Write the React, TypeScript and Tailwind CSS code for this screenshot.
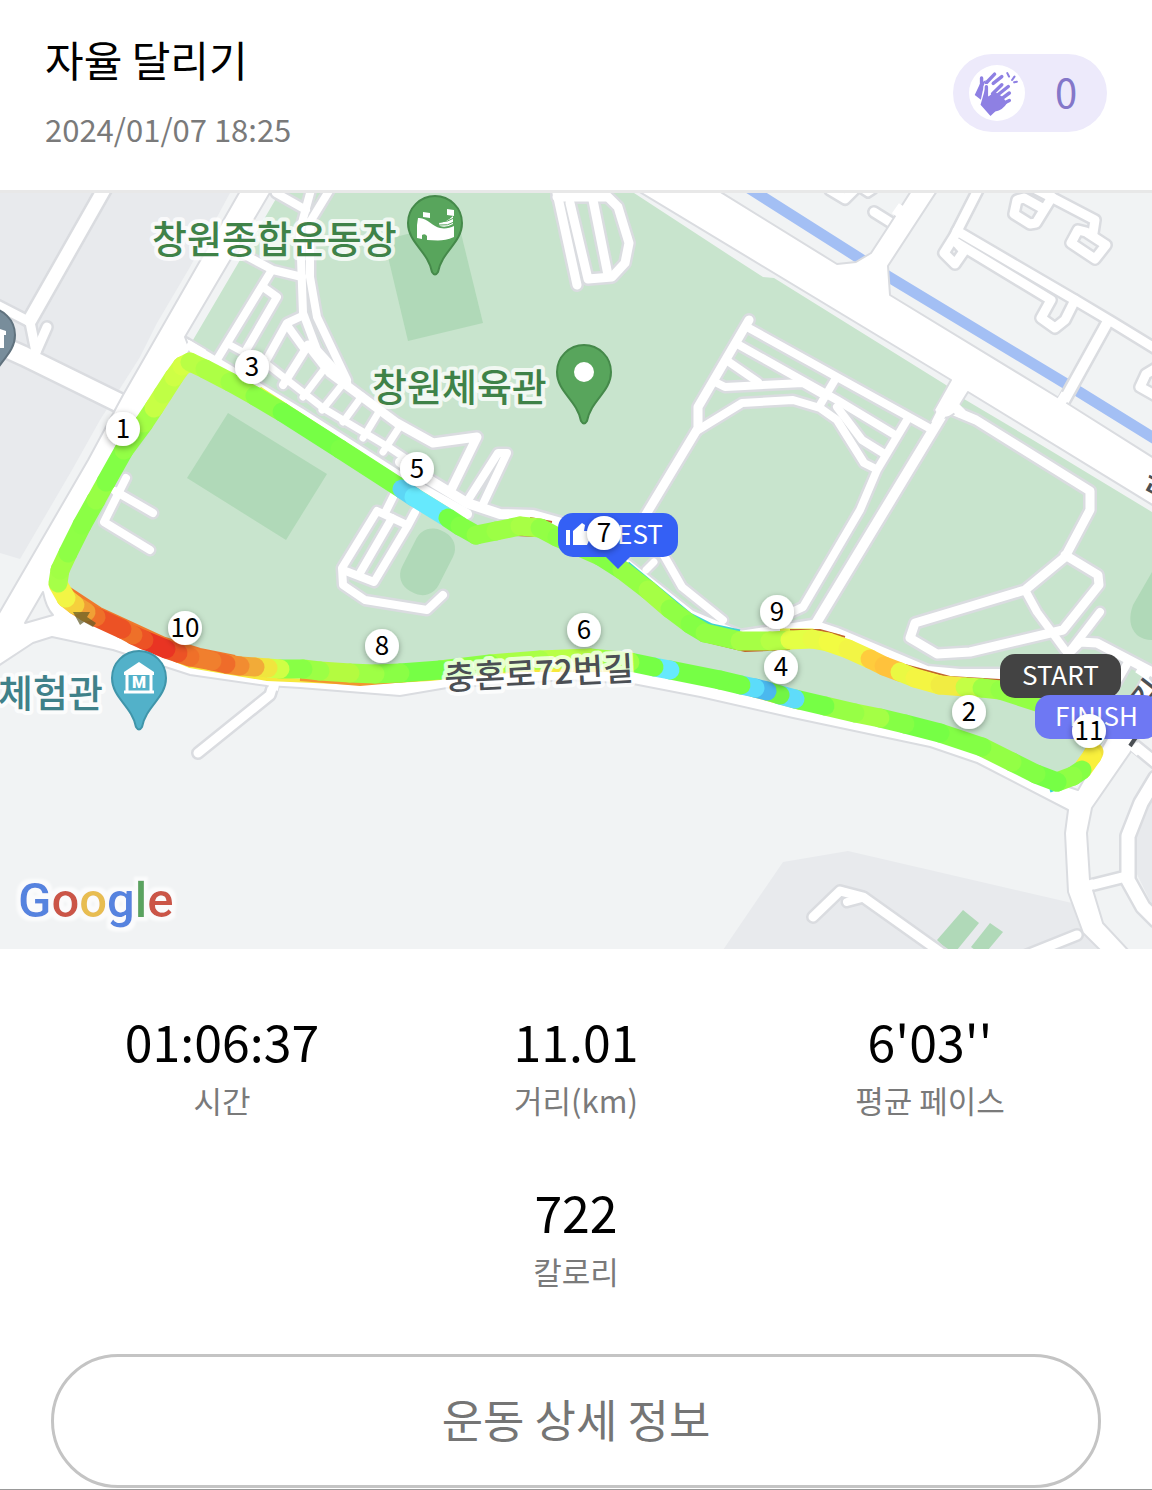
import React from 'react';

interface Marker {
  km: number;
  x: number;
  y: number;
}

interface Stat {
  value: string;
  label: string;
}

interface Road {
  d: string;
  w: number;
}

type RoutePoint = [number, number, string];

const stats: Stat[] = [
  { value: '01:06:37', label: '시간' },
  { value: '11.01', label: '거리(km)' },
  { value: "6'03''", label: '평균 페이스' },
  { value: '722', label: '칼로리' },
];

const markers: Marker[] = [
  { km: 1, x: 123, y: 429 },
  { km: 2, x: 969, y: 712 },
  { km: 3, x: 252, y: 367 },
  { km: 4, x: 781, y: 667 },
  { km: 5, x: 417, y: 469 },
  { km: 6, x: 584, y: 630 },
  { km: 7, x: 604, y: 533 },
  { km: 8, x: 382, y: 646 },
  { km: 9, x: 777, y: 612 },
  { km: 10, x: 185, y: 628 },
  { km: 11, x: 1089, y: 731 },
];

// streets outside the park
const streets: Road[] = [
  { d: 'M106 186L30 320', w: 13 },
  { d: 'M-5 304L30 322L36 352', w: 9 },
  { d: 'M47 327L36 352', w: 9 },
  { d: 'M-5 343L24 356L140 413', w: 18 },
  { d: 'M274 682L270 695L198 753', w: 9 },
  { d: 'M874 212L898 227', w: 9 },
  { d: 'M830 190L845 199L854 190', w: 9 },
  { d: 'M862 190L868 194L874 190', w: 5 },
  { d: 'M980 186L954 237L944 253L955 264L964 251L957 243', w: 9 },
  { d: 'M957 231L1075 300L1112 322L1156 349', w: 9 },
  { d: 'M957 243L1051 300L1041 318L1055 328L1065 320L1075 300', w: 9 },
  { d: 'M1107 323L1060 408', w: 10 },
  { d: 'M1052 197L1036 223L1030 224L1014 214L1017 200L1024 198L1042 208', w: 9 },
  { d: 'M1030 186L1095 220L1093 233', w: 9 },
  { d: 'M1078 230L1071 243L1095 259L1106 245L1086 232Z', w: 9 },
  { d: 'M1156 368L1146 374L1140 387L1156 396', w: 9 },
  { d: 'M1134 745L1156 763', w: 10 },
  { d: 'M1156 778L1141 803L1128 836L1128 880L1143 907L1156 920', w: 13 },
  { d: 'M1088 886L1128 876', w: 10 },
  { d: 'M813 917L840 891L863 897L943 954', w: 9 },
  { d: 'M847 902L862 898', w: 8 },
  { d: 'M1077 935L1022 957', w: 9 },
];

// footpaths and car parks inside the park
const paths: Road[] = [
  { d: 'M749 320L698 407L698 428L645 516', w: 9 },
  { d: 'M747 327L837 377L929 428', w: 8 },
  { d: 'M739 345L837 400L895 435', w: 8 },
  { d: 'M729 362L758 382', w: 8 },
  { d: 'M715 382L725 387L803 383L824 395', w: 8 },
  { d: 'M698 430L742 403L793 400L820 408L837 420L864 463L876 469', w: 8 },
  { d: 'M836 378L820 405', w: 8 },
  { d: 'M837 407L862 440L883 453', w: 8 },
  { d: 'M907 420L877 470L860 510L803 607L790 613', w: 8 },
  { d: 'M944 412L815 625', w: 10 },
  { d: 'M952 410L976 420L1090 491L1090 510L1065 557L1025 590L915 623L910 638L937 654L970 652L1063 630L1099 585L1098 575L1065 555', w: 9 },
  { d: 'M1025 590L1037 612L1065 650', w: 8 },
  { d: 'M1100 612L1067 655', w: 8 },
  { d: 'M1072 650L1080 642L1097 643L1156 674', w: 9 },
  { d: 'M1127 664L1112 690', w: 8 },
  { d: 'M723 620L682 587L662 552', w: 8 },
  { d: 'M654 562L646 570', w: 7 },
  { d: 'M557 193L577 285', w: 9 },
  { d: 'M570 203L588 279L612 277L625 263L629 243L618 207L608 197L557 197', w: 9 },
  { d: 'M593 200L608 275', w: 9 },
  { d: 'M312 186L300 230L303 313L317 350L347 383', w: 8 },
  { d: 'M332 186L310 222L310 277L317 317L347 380', w: 8 },
  { d: 'M276 193L306 210', w: 8 },
  { d: 'M243 254L273 270L302 277', w: 8 },
  { d: 'M270 273L218 358', w: 8 },
  { d: 'M263 287L277 297L245 352', w: 8 },
  { d: 'M230 345L252 357', w: 7 },
  { d: 'M302 316L287 323L262 368', w: 8 },
  { d: 'M287 325L305 350L283 385', w: 8 },
  { d: 'M308 345L330 373L397 423L433 443L477 437L450 492', w: 9 },
  { d: 'M268 365L323 408L390 448L420 468', w: 7 },
  { d: 'M325 368L303 397M342 385L322 410M362 396L343 422M380 410L363 438M400 426L383 452', w: 7 },
  { d: 'M468 500L498 453L507 453L483 504', w: 8 },
  { d: 'M394 495L385 513', w: 8 },
  { d: 'M415 512L407 527L374 582L343 570', w: 8 },
  { d: 'M392 518L360 573', w: 8 },
  { d: 'M407 525L377 511L342 568L343 585L365 600L427 610L443 595', w: 8 },
  { d: 'M115 491L153 513', w: 8 },
  { d: 'M126 478L104 522L150 550', w: 8 },
  { d: 'M184 343L300 413L400 477L467 514', w: 10 },
  { d: 'M400 462L467 503L500 514L533 515L565 524L627 565L690 615L740 636L813 625L837 633L927 671L960 674L1010 674', w: 10 },
];

const upperRoute: RoutePoint[] = [
  [58, 583, '#a6ff48'],
  [60, 570, '#a1ff45'],
  [68, 553, '#8eff46'],
  [82, 525, '#8bff45'],
  [96, 500, '#97ff45'],
  [106, 482, '#82ff45'],
  [124, 450, '#93ff45'],
  [144, 423, '#a4ff45'],
  [154, 408, '#c7ff45'],
  [163, 394, '#bfff45'],
  [174, 377, '#ceff45'],
  [182, 366, '#d5ff45'],
  [190, 362, '#b9ff45'],
  [205, 369, '#adff45'],
  [230, 382, '#a0ff45'],
  [255, 396, '#8cff45'],
  [282, 412, '#76ff45'],
  [340, 449, '#7dff45'],
  [402, 489, '#5dd6f5'],
  [414, 497, '#66e9fd'],
  [448, 518, '#76ff45'],
  [460, 526, '#83ff45'],
  [476, 535, '#93ff45'],
  [496, 531, '#9cff45'],
  [520, 526, '#a8ff45'],
  [540, 528, '#93ff45'],
  [557, 537, '#8cff45'],
  [600, 556, '#84ff45'],
  [622, 570, '#95ff45'],
  [648, 590, '#a5ff45'],
  [670, 609, '#90ff45'],
  [690, 624, '#85ff45'],
  [705, 633, '#93ff45'],
  [740, 641, '#a6ff45'],
  [770, 641, '#b5ff45'],
  [790, 640, '#e4ff45'],
  [812, 639, '#e9fb45'],
  [828, 642, '#f2fb42'],
  [848, 649, '#f2f545'],
  [870, 659, '#ffcc3d'],
  [884, 666, '#ffc23c'],
  [900, 672, '#eaf943'],
  [915, 678, '#f4f542'],
  [940, 685, '#f1ec42'],
  [965, 687, '#c4ff45'],
  [982, 688, '#9dff45'],
  [1000, 690, '#93ff45'],
  [1040, 703, '#8cff45'],
];

const lowerRoute: RoutePoint[] = [
  [1094, 752, '#f3e23c'],
  [1092, 756, '#f9f03c'],
  [1082, 770, '#85ff45'],
  [1073, 776, '#8fff45'],
  [1057, 782, '#76ff45'],
  [1036, 774, '#83ff45'],
  [1012, 762, '#93ff45'],
  [982, 747, '#83ff45'],
  [940, 733, '#76ff45'],
  [905, 724, '#85ff45'],
  [880, 718, '#a4ff45'],
  [855, 713, '#97ff45'],
  [825, 706, '#76ff45'],
  [795, 699, '#5fdcfa'],
  [780, 695, '#72f545'],
  [767, 691, '#4bb8ee'],
  [755, 688, '#5cdcfa'],
  [741, 685, '#76ff45'],
  [720, 680, '#76ff45'],
  [670, 670, '#66e9fd'],
  [654, 667, '#76ff45'],
  [630, 662, '#9dff45'],
  [590, 658, '#b8ff45'],
  [540, 660, '#aaff45'],
  [490, 664, '#8cff45'],
  [440, 670, '#76ff45'],
  [400, 673, '#8aff45'],
  [375, 674, '#9eff45'],
  [350, 673, '#b4fb40'],
  [320, 671, '#9cff45'],
  [303, 669, '#88ff45'],
  [280, 669, '#d0ff45'],
  [268, 668, '#f0e53e'],
  [255, 667, '#f2ab38'],
  [240, 666, '#f28c31'],
  [226, 664, '#ef6c2a'],
  [212, 661, '#f07f2e'],
  [190, 657, '#ef7029'],
  [178, 653, '#ec5225'],
  [166, 649, '#e93423'],
  [144, 640, '#ec5225'],
  [133, 635, '#ee7029'],
  [122, 629, '#ec5225'],
  [96, 617, '#ee7029'],
  [86, 612, '#f0a035'],
  [75, 605, '#f6d03c'],
  [66, 598, '#f2f545'],
  [58, 584, '#c7ff45'],
];

const labelFont = '"Noto Sans CJK KR", "Noto Sans", sans-serif';

function ClapIcon() {
  return (
    <svg viewBox="225 146 140 140" className="h-12 w-12" fill="none" stroke="#8e80e3" strokeLinecap="round" aria-hidden="true">
      <path d="M250 172V204M264 186L288 161M284 188L309 168" strokeWidth="10" />
      <path d="M245 190L262 178L256 196L248 236L230 222Z" fill="#8e80e3" stroke="none" />
      {/* front hand, cut out of the one behind it */}
      <path d="M264 198V236M282 218L309 192" strokeWidth="17" stroke="#fff" />
      <path d="M264 198V236M282 218L309 192M294 224L328 197M304 236L331 216M306 250L331 238" strokeWidth="10" />
      <path
        d="M260 205L270 226L288 212L312 228L324 246Q312 266 290 270L276 283L247 250Z"
        fill="#8e80e3"
        stroke="none"
      />
      <path d="M325 158L330 168M339 178L346 168M345 185L353 183" strokeWidth="6" />
    </svg>
  );
}

function Roads({ roads, casing }: { roads: Road[]; casing: string }) {
  return (
    <g fill="none" strokeLinecap="round" strokeLinejoin="round">
      {roads.map((road) => (
        <path key={road.d} d={road.d} stroke={casing} strokeWidth={road.w + 5} />
      ))}
      {roads.map((road) => (
        <path key={road.d} d={road.d} stroke="#fff" strokeWidth={road.w} />
      ))}
    </g>
  );
}

function Route({ points }: { points: RoutePoint[] }) {
  return (
    <g strokeWidth="19" strokeLinecap="round">
      {points.slice(0, -1).map(([x, y, color], i) => (
        <line key={i} x1={x} y1={y} x2={points[i + 1][0]} y2={points[i + 1][1]} stroke={color} />
      ))}
    </g>
  );
}

function Pin({ x, y, fill, stroke, children }: { x: number; y: number; fill: string; stroke: string; children?: React.ReactNode }) {
  return (
    <g transform={`translate(${x} ${y})`}>
      <path
        d="M0 -27A27 27 0 0 1 27 0C27 20 7 28 3 49Q0 54 -3 49C-7 28 -27 20 -27 0A27 27 0 0 1 0 -27Z"
        fill={fill}
        stroke={stroke}
        strokeWidth="2"
      />
      {children}
    </g>
  );
}

function MapLabel({ x, y, size, fill, children }: { x: number; y: number; size: number; fill: string; children: string }) {
  return (
    <text
      x={x}
      y={y}
      fontFamily={labelFont}
      fontSize={size}
      fontWeight="500"
      fill={fill}
      stroke="#fff"
      strokeOpacity="0.75"
      strokeWidth="8"
      strokeLinejoin="round"
      paintOrder="stroke"
    >
      {children}
    </text>
  );
}

function Badge({ x, y, w, fill, textX, children }: { x: number; y: number; w: number; fill: string; textX: number; children: string }) {
  return (
    <g>
      <rect x={x} y={y} width={w} height="44" rx="15" fill={fill} />
      <text x={textX} y={y + 31} fontFamily={labelFont} fontSize="26" fill="#fff">
        {children}
      </text>
    </g>
  );
}

function RunMap() {
  return (
    <svg viewBox="0 193 1152 756" className="block w-full bg-[#f1f3f4]" role="img" aria-label="달리기 경로 지도">
      <defs>
        <filter id="marker-shadow" x="-40%" y="-40%" width="180%" height="180%">
          <feDropShadow dx="0" dy="2" stdDeviation="3" floodColor="#000" floodOpacity="0.35" />
        </filter>
        <filter id="logo-halo" x="-10%" y="-20%" width="120%" height="140%">
          <feMorphology in="SourceAlpha" operator="dilate" radius="4" result="spread" />
          <feGaussianBlur in="spread" stdDeviation="1" result="soft" />
          <feFlood floodColor="#fff" floodOpacity="0.7" />
          <feComposite in2="soft" operator="in" result="halo" />
          <feMerge>
            <feMergeNode in="halo" />
            <feMergeNode in="SourceGraphic" />
          </feMerge>
        </filter>
      </defs>

      {/* land */}
      <g fill="#e8eaed">
        <path d="M0 193H230L190 267L157 323L140 357L100 420L72 470L20 559L0 553Z" />
        <path d="M723 950L783 862L848 851L1072 903L1083 933L1100 950Z" />
        <path d="M1152 790L1135 838V870L1152 905Z" />
      </g>
      <path
        d="M277 193H634L732 257L763 277L774 278L946 385L964 399L1033 440L1152 512V680L1130 700L1093 757L1057 783L1020 767L977 743L927 730L793 700L660 668L583 658L500 662L433 670L367 673L267 670L160 647L70 603L58 583L113 470L190 350L193 340L240 260L277 197Z"
        fill="#c8e4cd"
      />
      <g fill="#b0d9b8">
        <path d="M228 413L327 474L286 540L187 478Z" />
        <path d="M384 240L458 221L483 323L408 341Z" />
        <rect x="407" y="528" width="41" height="68" rx="18" transform="rotate(27 428 562)" />
        <path d="M1152 572L1133 605Q1126 624 1137 635Q1143 640 1152 640Z" />
        <path d="M963 910L979 923L957 950H947L937 940Z" />
        <path d="M990 923L1003 932L988 950H975L971 947Z" />
      </g>
      <path d="M744 185L859 258L889 277L1068 385L1152 437L1160 442" fill="none" stroke="#a3bff4" strokeWidth="11" />

      <Roads roads={paths} casing="#dadce0" />
      <Roads roads={streets} casing="#dadce0" />

      {/* main roads */}
      <g fill="#fff" stroke="#dadce0" strokeWidth="2" strokeLinejoin="round">
        <path d="M240 191L123 395L88 460L-2 615V666L33 643L52 637L113 650L190 675L267 686L300 688L400 696L447 688L567 680L633 684L700 697L793 718L930 747L977 763L1068 810L1065 833L1068 892L1083 933L1102 952H1130L1103 923L1090 880L1087 833L1092 808L1130 753L1164 697L1145 672L1078 790L1057 783L1020 767L977 743L927 730L793 700L660 668L583 658L500 662L433 670L367 673L267 670L160 647L70 603L58 583L113 470L190 350L185 337L271 191Z" />
        <path d="M719 191L837 264L856 262L871 253L888 227L911 191H937L888 266L890 295L1059 398L1070 405L1154 458V506L968 392L955 413Q942 424 934 410L951 380L638 191Z" />
        <path d="M43 592L25 623L53 615Q46 608 43 592Z" fill="#f1f3f4" />
      </g>
      <path d="M1066 394L1058 407" stroke="#fff" strokeWidth="10" />
      <path d="M896 216L903 206M1133 746L1140 752M131 408L140 413M1084 887L1094 884M944 408L936 424M952 404L962 414M274 684L273 690M1138 668L1150 676" stroke="#fff" strokeWidth="10" />
      <path d="M187 344L204 354" stroke="#fff" strokeWidth="9" />

      {/* traces of the previous laps */}
      <g fill="none" strokeWidth="3">
        <path d="M62 602L130 641L190 666L267 679L360 683L430 679L520 670L640 670L730 689L800 708" stroke="#f6e83c" strokeWidth="4" />
        <path d="M300 679L360 684L430 678" stroke="#f2962f" strokeWidth="4" />
        <path d="M68 588L100 609L165 639L200 650L235 657" stroke="#ef7a2c" strokeWidth="4" />
        <path d="M260 388L400 479L450 510M780 630L812 630L840 636M500 661L560 652" stroke="#e8f545" />
        <path d="M628 563L690 614L712 625L740 631M1050 791L1075 782" stroke="#3fd3d0" />
        <path d="M700 640L745 651L790 649M790 630L820 630L845 637M905 665L950 677L1000 680M516 535L536 536M530 518L552 522" stroke="#c0662c" strokeWidth="2" />
      </g>
      <Route points={lowerRoute} />
      <Route points={upperRoute} />
      <path d="M73 612L90 612L87 617L96 623L93 627L84 622L80 625Z" fill="#5f5a26" fillOpacity="0.7" />

      {/* places */}
      <MapLabel x={152} y={253} size={38} fill="#3f8248">창원종합운동장</MapLabel>
      <MapLabel x={372} y={401} size={38} fill="#3f8248">창원체육관</MapLabel>
      <MapLabel x={-2} y={707} size={38} fill="#3f8189">체험관</MapLabel>
      <g transform="rotate(-3 445 690)">
        <MapLabel x={445} y={690} size={33} fill="#4b4f54">충혼로72번길</MapLabel>
      </g>
      <g fontFamily={labelFont} fontSize="32" fontWeight="500" fill="#4b4f54">
        <text x="1142" y="486" transform="rotate(28 1142 486)">원</text>
        <text x="1148" y="714" transform="rotate(-52 1148 714)">길</text>
      </g>
      <path d="M1130 746L1139 733" stroke="#4b4f54" strokeWidth="4" />
      <Pin x={435} y={223} fill="#58a55c" stroke="#45894a">
        <path d="M-12 -11L-5 -10V-5L-12 -6ZM12 -14L19 -13V-7L12 -8Z" fill="#fff" />
        <path d="M-17 -5C-8 -6 -2 4 5 5C10 6 15 5 19 3V14C8 19 0 17 -8 17V13Q-10 10 -13 12V16L-18 15V2Z" fill="#fff" />
        <path d="M4 0Q12 -1 18 -7V1Q11 5 5 3Z" fill="#fff" />
        <path d="M5 -1Q13 -1 19 -5M5 2Q13 3 19 -1" fill="none" stroke="#58a55c" />
      </Pin>
      <Pin x={584} y={372} fill="#58a55c" stroke="#45894a">
        <circle r="10" fill="#fff" />
      </Pin>
      <Pin x={139} y={678} fill="#52b1c9" stroke="#4095aa">
        <path d="M0 -16L15 -6V-3H-15V-6Z" fill="#fff" />
        <path d="M-12 -3V14M12 -3V14M-15 14H15" fill="none" stroke="#fff" strokeWidth="3" />
        <text y="10" textAnchor="middle" fontFamily="Roboto, sans-serif" fontSize="16" fontWeight="900" fill="#fff">M</text>
      </Pin>
      <Pin x={-12} y={335} fill="#788d9b" stroke="#60727e">
        <path d="M0 -10L18 -4V0H0ZM12 0H16V13H12Z" fill="#fff" />
      </Pin>

      <text x="18" y="917" fontFamily="Roboto, sans-serif" fontSize="49" fontWeight="500" filter="url(#logo-halo)">
        <tspan fill="#5683df">G</tspan>
        <tspan fill="#cb5547">o</tspan>
        <tspan fill="#e8bd51">o</tspan>
        <tspan fill="#5683df">g</tspan>
        <tspan fill="#5aa35f">l</tspan>
        <tspan fill="#cb5547">e</tspan>
      </text>

      {/* flags and kilometre markers */}
      <path d="M605 556L618 569L631 556Z" fill="#3460f5" />
      <Badge x={558} y={513} w={120} fill="#3460f5" textX={600}>BEST</Badge>
      <path d="M566 530H570V545H566ZM573 531L582 523L585 525L584 531H591V536L587 545H573Z" fill="#fff" />
      <Badge x={1000} y={654} w={121} fill="#434343" textX={1022}>START</Badge>
      <Badge x={1035} y={695} w={124} fill="#6e78f3" textX={1055}>FINISH</Badge>
      {markers.map((marker) => (
        <g key={marker.km}>
          <circle cx={marker.x} cy={marker.y} r="17" fill="#fff" filter="url(#marker-shadow)" />
          <text x={marker.x} y={marker.y + 9} textAnchor="middle" fontFamily={labelFont} fontSize="26" fill="#000">
            {marker.km}
          </text>
        </g>
      ))}
    </svg>
  );
}

export default function App() {
  return (
    <div className="bg-white font-['Noto_Sans_CJK_KR','Noto_Sans',sans-serif] text-black">
      <header className="flex h-[193px] items-start justify-between border-b-3 border-[#e8e8e8] px-[45px] pt-[35px]">
        <div>
          <h1 className="text-[42px] leading-[48px]">자율 달리기</h1>
          <p className="mt-[22px] text-[31px] leading-[48px] text-[#7a7a7a]">2024/01/07 18:25</p>
        </div>
        <button
          className="mt-[19px] flex h-[78px] w-[154px] items-center rounded-full bg-[#edeafb] pl-4 text-[40px] leading-[48px] text-[#8477c9]"
          aria-label="박수 0"
        >
          <span className="flex h-14 w-14 items-center justify-center rounded-full bg-white">
            <ClapIcon />
          </span>
          <span className="flex-1 pb-1 text-center">0</span>
        </button>
      </header>

      <RunMap />

      <main>
        <dl className="flex flex-wrap justify-center gap-y-[51px] px-[45px] pt-[55px]">
          {stats.map((stat) => (
            <div key={stat.label} className="flex w-1/3 flex-col-reverse text-center">
              <dt className="text-[31px] leading-[48px] text-[#7a7a7a]">{stat.label}</dt>
              <dd className="text-[50px] leading-[72px]">{stat.value}</dd>
            </div>
          ))}
        </dl>
        <div className="border-b border-[#999] px-[51px] pt-[59px]">
          <button className="mb-px h-[134px] w-full rounded-full border-3 border-[#c4c4c4] pb-1 text-[45px] leading-[64px] text-[#757575]">
            운동 상세 정보
          </button>
        </div>
      </main>
    </div>
  );
}
